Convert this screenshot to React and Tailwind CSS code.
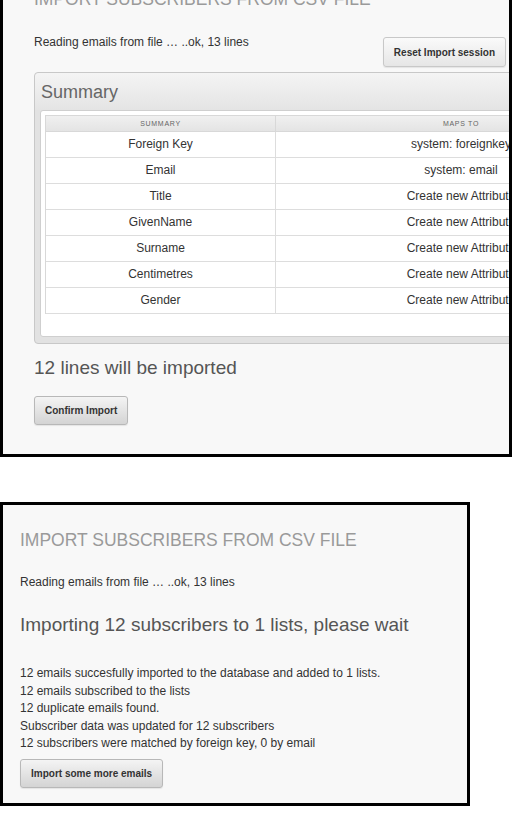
const ROWS = [
  ["Foreign Key", "system: foreignkey"],
  ["Email", "system: email"],
  ["Title", "Create new Attribute"],
  ["GivenName", "Create new Attribute"],
  ["Surname", "Create new Attribute"],
  ["Centimetres", "Create new Attribute"],
  ["Gender", "Create new Attribute"],
];

const RESULTS = [
  "12 emails succesfully imported to the database and added to 1 lists.",
  "12 emails subscribed to the lists",
  "12 duplicate emails found.",
  "Subscriber data was updated for 12 subscribers",
  "12 subscribers were matched by foreign key, 0 by email",
];

function Button({ children, light }) {
  return (
    <button
      className={`h-[29px] px-[10px] rounded-[3px] border text-[10px] font-bold text-[#333] whitespace-nowrap shadow-[0_1px_1px_rgba(0,0,0,0.08)] bg-gradient-to-b ${
        light ? "from-[#fafafa] to-[#e6e6e6] border-[#c8c8c8] h-[30px]" : "from-[#f4f4f4] to-[#d4d4d4] border-[#b8b8b8]"
      }`}
    >
      {children}
    </button>
  );
}

function Heading() {
  return (
    <h1 className="text-[17.5px] leading-[20px] text-[#9a9a9a] whitespace-nowrap">
      IMPORT SUBSCRIBERS FROM CSV FILE
    </h1>
  );
}

export default function App() {
  return (
    <div className="bg-white w-[512px] h-[814px] overflow-hidden font-['Liberation_Sans',Arial,sans-serif]">
      {/* top panel, cropped at the top */}
      <div className="h-[457px] overflow-hidden">
        <div className="-mt-[39px] h-[496px] w-[512px] border-[3px] border-black bg-[#f8f8f8] overflow-hidden pt-[25px] pl-[31px]">
          <Heading />
          <div className="mt-[24px] w-[472px] flex items-start justify-between">
            <p className="text-[12px] leading-[18px] text-[#333]">Reading emails from file … ..ok, 13 lines</p>
            <div className="mt-[4px]">
              <Button light>Reset Import session</Button>
            </div>
          </div>

          <div className="mt-[5px] w-[622px] rounded-[4px] border border-[#c8c8c8] bg-[#e2e2e2] px-[5px] pb-[6px]">
            <div className="-mx-[5px] px-[6px] pt-[8px] pb-[7px] rounded-t-[4px] bg-gradient-to-b from-[#f4f4f4] to-[#e4e4e4]">
              <h2 className="text-[18px] leading-[22px] text-[#666]">Summary</h2>
            </div>
            <div className="rounded-[3px] border border-[#cfcfcf] bg-white p-[4px] pb-[22px]">
              <div className="border-l border-t border-[#d8d8d8] w-[602px]">
                <div className="flex h-[16px] bg-gradient-to-b from-[#f0f0f0] to-[#e4e4e4] border-b border-[#d8d8d8] text-[7px] tracking-[0.7px] text-[#666] leading-[15px]">
                  <div className="w-[230px] border-r border-[#d8d8d8] text-center">SUMMARY</div>
                  <div className="w-[370px] text-center">MAPS TO</div>
                </div>
                {ROWS.map(([a, b]) => (
                  <div key={a} className="flex h-[26px] border-b border-[#dddddd] text-[12px] text-[#333] leading-[25px]">
                    <div className="w-[230px] border-r border-[#dddddd] text-center">{a}</div>
                    <div className="w-[370px] text-center">{b}</div>
                  </div>
                ))}
              </div>
            </div>
          </div>

          <p className="mt-[13px] text-[19px] leading-[22px] text-[#555]">12 lines will be imported</p>
          <div className="mt-[17px]">
            <Button>Confirm Import</Button>
          </div>
        </div>
      </div>

      {/* bottom panel */}
      <div className="mt-[45px] w-[470px] border-[3px] border-black bg-[#f8f8f8] pt-[25px] pl-[17px] pb-[15px]">
        <Heading />
        <p className="mt-[23px] text-[12px] leading-[18px] text-[#333]">Reading emails from file … ..ok, 13 lines</p>
        <p className="mt-[23px] text-[19px] leading-[22px] text-[#555] whitespace-nowrap">
          Importing 12 subscribers to 1 lists, please wait
        </p>
        <div className="mt-[29px] text-[12px] leading-[17.6px] text-[#333]">
          {RESULTS.map(r => (
            <p key={r} className="whitespace-nowrap">{r}</p>
          ))}
        </div>
        <div className="mt-[6px]">
          <Button>Import some more emails</Button>
        </div>
      </div>
    </div>
  );
}
